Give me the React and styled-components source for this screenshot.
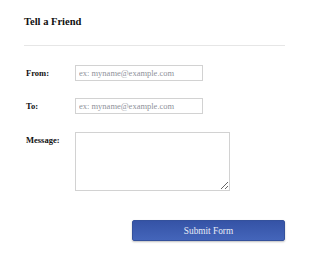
import React from "react";
import styled, { createGlobalStyle } from "styled-components";

const Global = createGlobalStyle`
  html, body { margin: 0; padding: 0; background: #fff; }
  body { font-family: "Liberation Serif", "Times New Roman", serif; }
`;

const Page = styled.div`
  width: 310px;
  height: 256px;
  padding: 0 25px 0 24px;
  box-sizing: border-box;
`;

const Title = styled.h1`
  margin: 0;
  padding-top: 15px;
  height: 46px;
  box-sizing: border-box;
  font-size: 10.5px;
  font-weight: bold;
  color: #111;
  border-bottom: 1px solid #e6e6e6;
  line-height: 13px;
`;

const Form = styled.form`
  display: flex;
  flex-direction: column;
  padding-top: 19px;
`;

const Row = styled.div`
  display: flex;
  align-items: ${(p) => (p.$top ? "flex-start" : "center")};
  margin-bottom: ${(p) => p.$mb}px;
`;

const Label = styled.label`
  width: 51px;
  padding-left: 2px;
  box-sizing: border-box;
  font-size: 8.5px;
  font-weight: bold;
  color: #111;
  padding-top: ${(p) => (p.$top ? 3 : 0)}px;
`;

const Input = styled.input`
  width: 128px;
  height: 16px;
  box-sizing: border-box;
  border: 1px solid #d2d2d2;
  padding: 0 3px;
  margin: 0;
  font-family: "Liberation Serif", serif;
  font-size: 8.5px;
  color: #333;
  outline: none;
  &::placeholder { color: #8f939b; }
`;

const TextArea = styled.textarea`
  width: 155px;
  height: 59px;
  box-sizing: border-box;
  border: 1px solid #d2d2d2;
  margin: 0;
  font-family: "Liberation Serif", serif;
  font-size: 8.5px;
  outline: none;
`;

const ButtonRow = styled.div`
  display: flex;
  padding-left: 108px;
`;

const Button = styled.button`
  width: 153px;
  height: 21px;
  border: 1px solid #34519c;
  border-radius: 2px;
  background: linear-gradient(#3553a6, #4465ba);
  box-shadow: 0 1px 2px rgba(0, 0, 0, 0.25);
  color: #e9edf7;
  font-family: "Liberation Serif", serif;
  font-size: 9.3px;
  padding: 0;
  cursor: pointer;
`;

export default function App() {
  return (
    <>
      <Global />
      <Page>
        <Title>Tell a Friend</Title>
        <Form onSubmit={(e) => e.preventDefault()}>
          <Row $mb={17}>
            <Label>From:</Label>
            <Input placeholder="ex: myname@example.com" />
          </Row>
          <Row $mb={18}>
            <Label>To:</Label>
            <Input placeholder="ex: myname@example.com" />
          </Row>
          <Row $top $mb={29}>
            <Label $top>Message:</Label>
            <TextArea />
          </Row>
          <ButtonRow>
            <Button type="submit">Submit Form</Button>
          </ButtonRow>
        </Form>
      </Page>
    </>
  );
}
